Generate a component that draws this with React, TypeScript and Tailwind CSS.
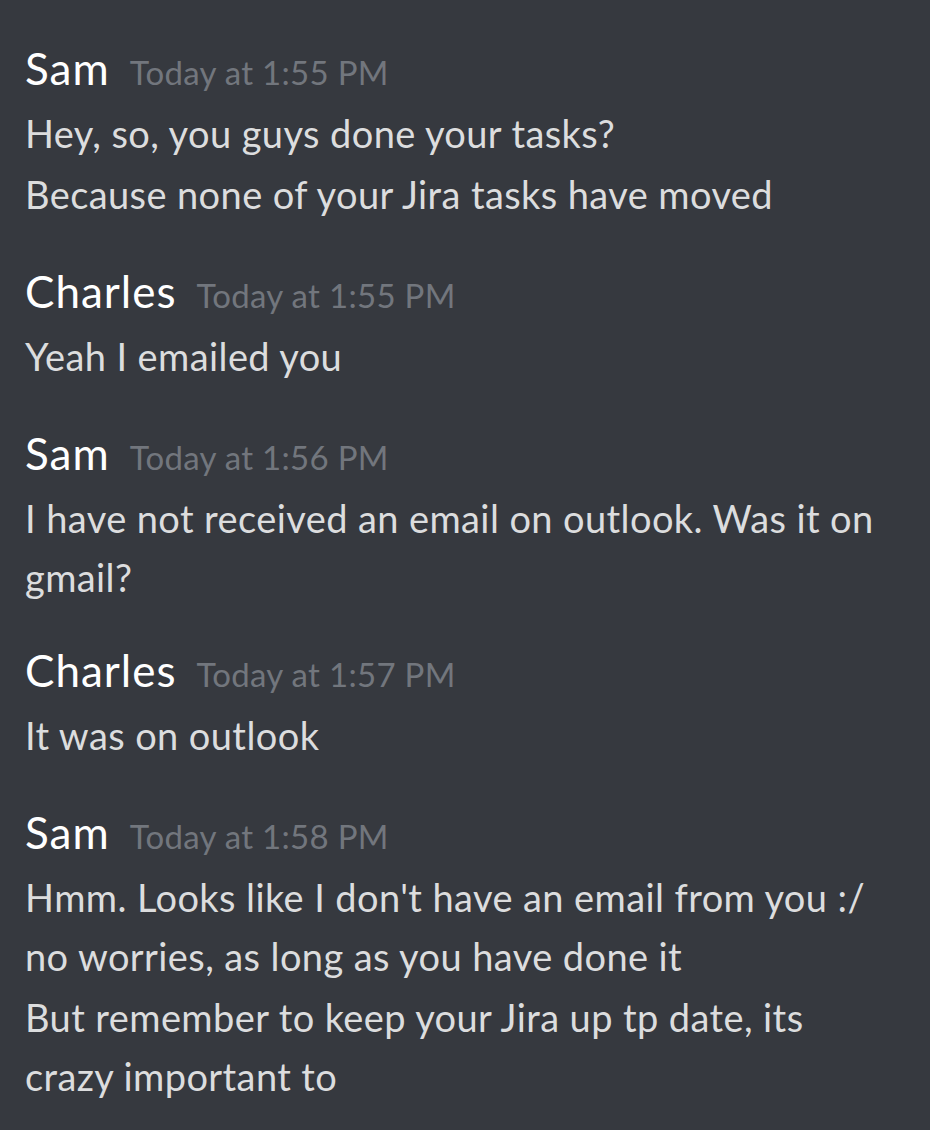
const MESSAGES = [
  { name: "Sam", time: "Today at 1:55 PM", lines: ["Hey, so, you guys done your tasks?", "Because none of your Jira tasks have moved"] },
  { name: "Charles", time: "Today at 1:55 PM", lines: ["Yeah I emailed you"] },
  { name: "Sam", time: "Today at 1:56 PM", lines: ["I have not received an email on outlook. Was it on gmail?"] },
  { name: "Charles", time: "Today at 1:57 PM", lines: ["It was on outlook"], tight: true },
  {
    name: "Sam",
    time: "Today at 1:58 PM",
    lines: [
      "Hmm. Looks like I don't have an email from you :/\nno worries, as long as you have done it",
      "But remember to keep your Jira up tp date, its crazy important to",
    ],
  },
];

export default function App() {
  return (
    <div className="min-h-[1130px] w-[930px] bg-[#36393f] pl-[25px] pr-[45px] pt-[38px] font-['Lato','Open_Sans',sans-serif]">
      <div className="flex flex-col gap-[37px]">
        {MESSAGES.map((m, i) => (
          <div key={i} className={m.tight ? "-mt-[4px] flex flex-col" : "flex flex-col"}>
            <div className="flex items-baseline gap-[20px] leading-[60px]">
              <span className="text-[44px] tracking-[1px] text-white">{m.name}</span>
              <span className="text-[33px] tracking-[0.3px] text-[#72767d]">{m.time}</span>
            </div>
            <div className="flex flex-col gap-[2px] pt-[2px]">
              {m.lines.map((l, j) => (
                <p key={j} className="whitespace-pre-line text-[38px] leading-[59px] tracking-[0.4px] text-[#dcddde]">{l}</p>
              ))}
            </div>
          </div>
        ))}
      </div>
    </div>
  );
}
